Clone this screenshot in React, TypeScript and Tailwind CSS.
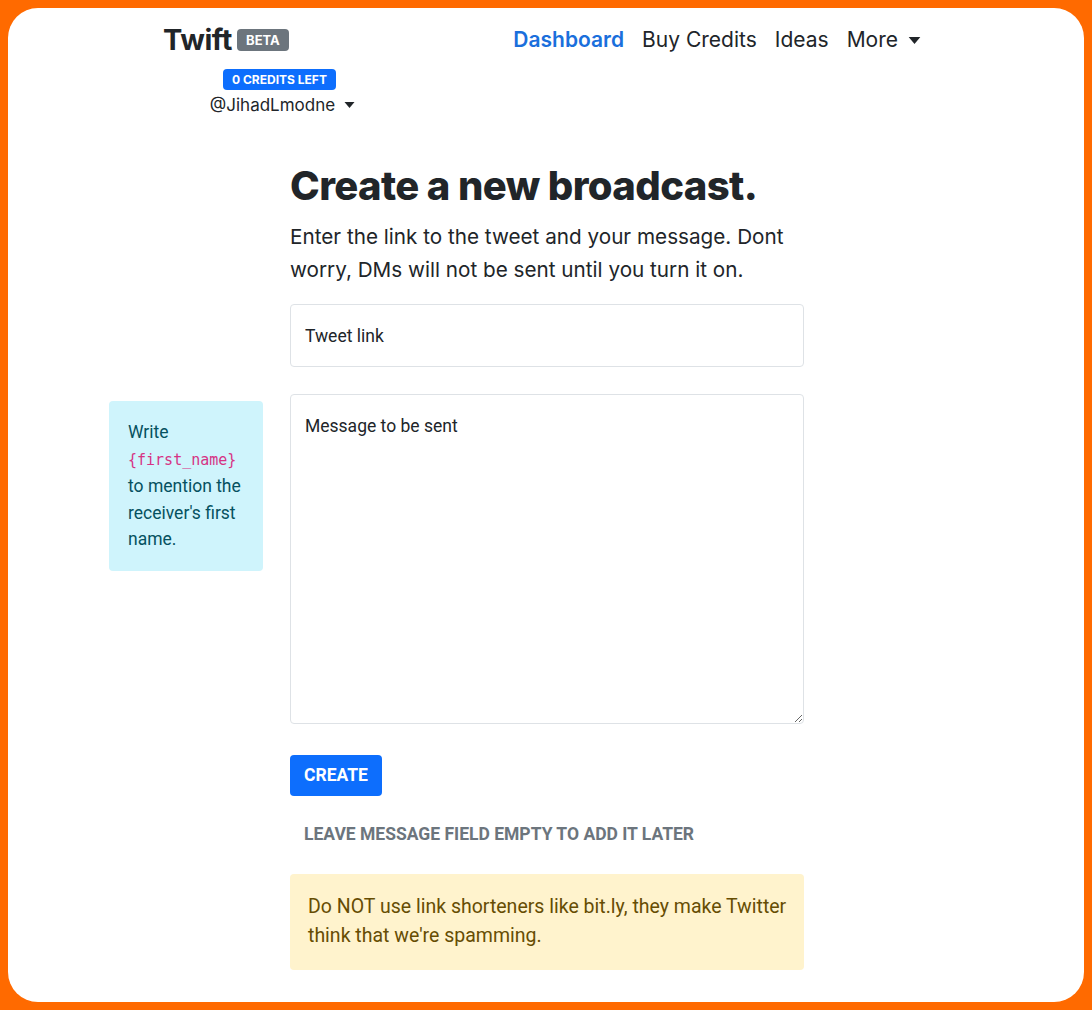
import React from 'react';

const Caret: React.FC<{ className?: string }> = ({ className }) => (
  <svg viewBox="0 0 10 6" className={className} fill="currentColor">
    <path d="M0 0h10L5 6z" />
  </svg>
);

const NavLink: React.FC<{ active?: boolean; children: React.ReactNode }> = ({ active, children }) => (
  <a
    href="#"
    className={
      active
        ? 'text-[21px] font-semibold text-[#1a6fdc]'
        : 'text-[21px] font-normal text-[#212529]'
    }
  >
    {children}
  </a>
);

export default function App() {
  return (
    <div className="bg-[#ff6a00] p-2 min-h-[1010px]">
      <div className="bg-white rounded-[30px] h-[994px] overflow-hidden">
        {/* Navbar */}
        <header className="flex items-start justify-between pl-[155px] pr-[163px] pt-[14px] font-['Inter',sans-serif]">
          <div className="flex flex-col">
            <div className="flex items-center gap-[5px]">
              <span className="text-[29px] leading-[36px] font-bold tracking-[-0.4px] text-[#212529]">Twift</span>
              <span className="bg-[#6c757d] text-white text-[13px] font-bold rounded-[4px] px-[9px] py-[3px] leading-[16px]">
                BETA
              </span>
            </div>
            <div className="ml-[44px] mt-[11px] w-[145px] flex flex-col items-center">
              <span className="bg-[#0d6efd] text-white text-[12px] font-bold rounded-[4px] px-[9px] py-[3px] leading-[15px]">
                0 CREDITS LEFT
              </span>
              <div className="flex items-center gap-[9px] mt-[3px] ml-[6px] text-[17px] leading-[24px] text-[#212529]">
                <span>@JihadLmodne</span>
                <Caret className="w-[11px] h-[6px]" />
              </div>
            </div>
          </div>
          <nav className="flex items-center gap-[18px] h-[36px]">
            <NavLink active>Dashboard</NavLink>
            <NavLink>Buy Credits</NavLink>
            <NavLink>Ideas</NavLink>
            <div className="flex items-center gap-[10px] text-[21px] text-[#212529]">
              <span>More</span>
              <Caret className="w-[13px] h-[7px]" />
            </div>
          </nav>
        </header>

        {/* Main */}
        <main className="grid grid-cols-[1fr_514px_1fr] items-start mt-[43px] pl-[2px]">
          <div className="flex justify-end pr-[27px] pt-[241px]">
            <div className="w-[154px] bg-[#cff4fc] text-[#055160] rounded-[4px] px-[19px] py-[18px] text-[17.5px] leading-[26.5px] font-['Roboto',sans-serif]">
              Write{' '}
              <code className="text-[#d63384] text-[15px] font-['DejaVu_Sans_Mono',monospace]">{'{first_name}'}</code>{' '}
              to mention the receiver's first name.
            </div>
          </div>

          <div className="flex flex-col">
            <h1 className="mt-[2px] font-['Inter',sans-serif] text-[40px] leading-[48px] font-extrabold tracking-[-0.6px] text-[#212529]">
              Create a new broadcast.
            </h1>
            <p className="font-['Inter',sans-serif] text-[20.7px] leading-[33px] text-[#212529] mt-[10px]">
              Enter the link to the tweet and your message. Dont worry, DMs will not be sent until you turn it on.
            </p>

            <input
              type="text"
              placeholder="Tweet link"
              className="mt-[18px] h-[63px] w-full border border-[#dee2e6] rounded-[4px] px-[14px] text-[17.5px] font-['Roboto',sans-serif] text-[#212529] placeholder:text-[#212529] outline-none"
            />
            <textarea
              placeholder="Message to be sent"
              className="mt-[27px] h-[330px] w-full border border-[#dee2e6] rounded-[4px] px-[14px] pt-[19px] text-[17.5px] leading-[24px] font-['Roboto',sans-serif] text-[#212529] placeholder:text-[#212529] outline-none resize-y"
            />

            <div className="mt-[31px]">
              <button className="bg-[#0d6efd] text-white font-['Roboto',sans-serif] font-bold text-[17.5px] rounded-[4px] px-[14px] h-[41px] leading-[41px]">
                CREATE
              </button>
            </div>
            <div className="mt-[20px] px-[14px] h-[36px] flex items-center font-['Roboto',sans-serif] font-bold text-[17.5px] text-[#6c757d]">
              LEAVE MESSAGE FIELD EMPTY TO ADD IT LATER
            </div>

            <div className="mt-[22px] bg-[#fff3cd] text-[#664d03] rounded-[4px] pl-[18px] pr-[16px] pt-[18px] pb-[20px] font-['Roboto',sans-serif] text-[19.5px] leading-[29px]">
              Do NOT use link shorteners like bit.ly, they make Twitter think that we're spamming.
            </div>
          </div>

          <div />
        </main>
      </div>
    </div>
  );
}
